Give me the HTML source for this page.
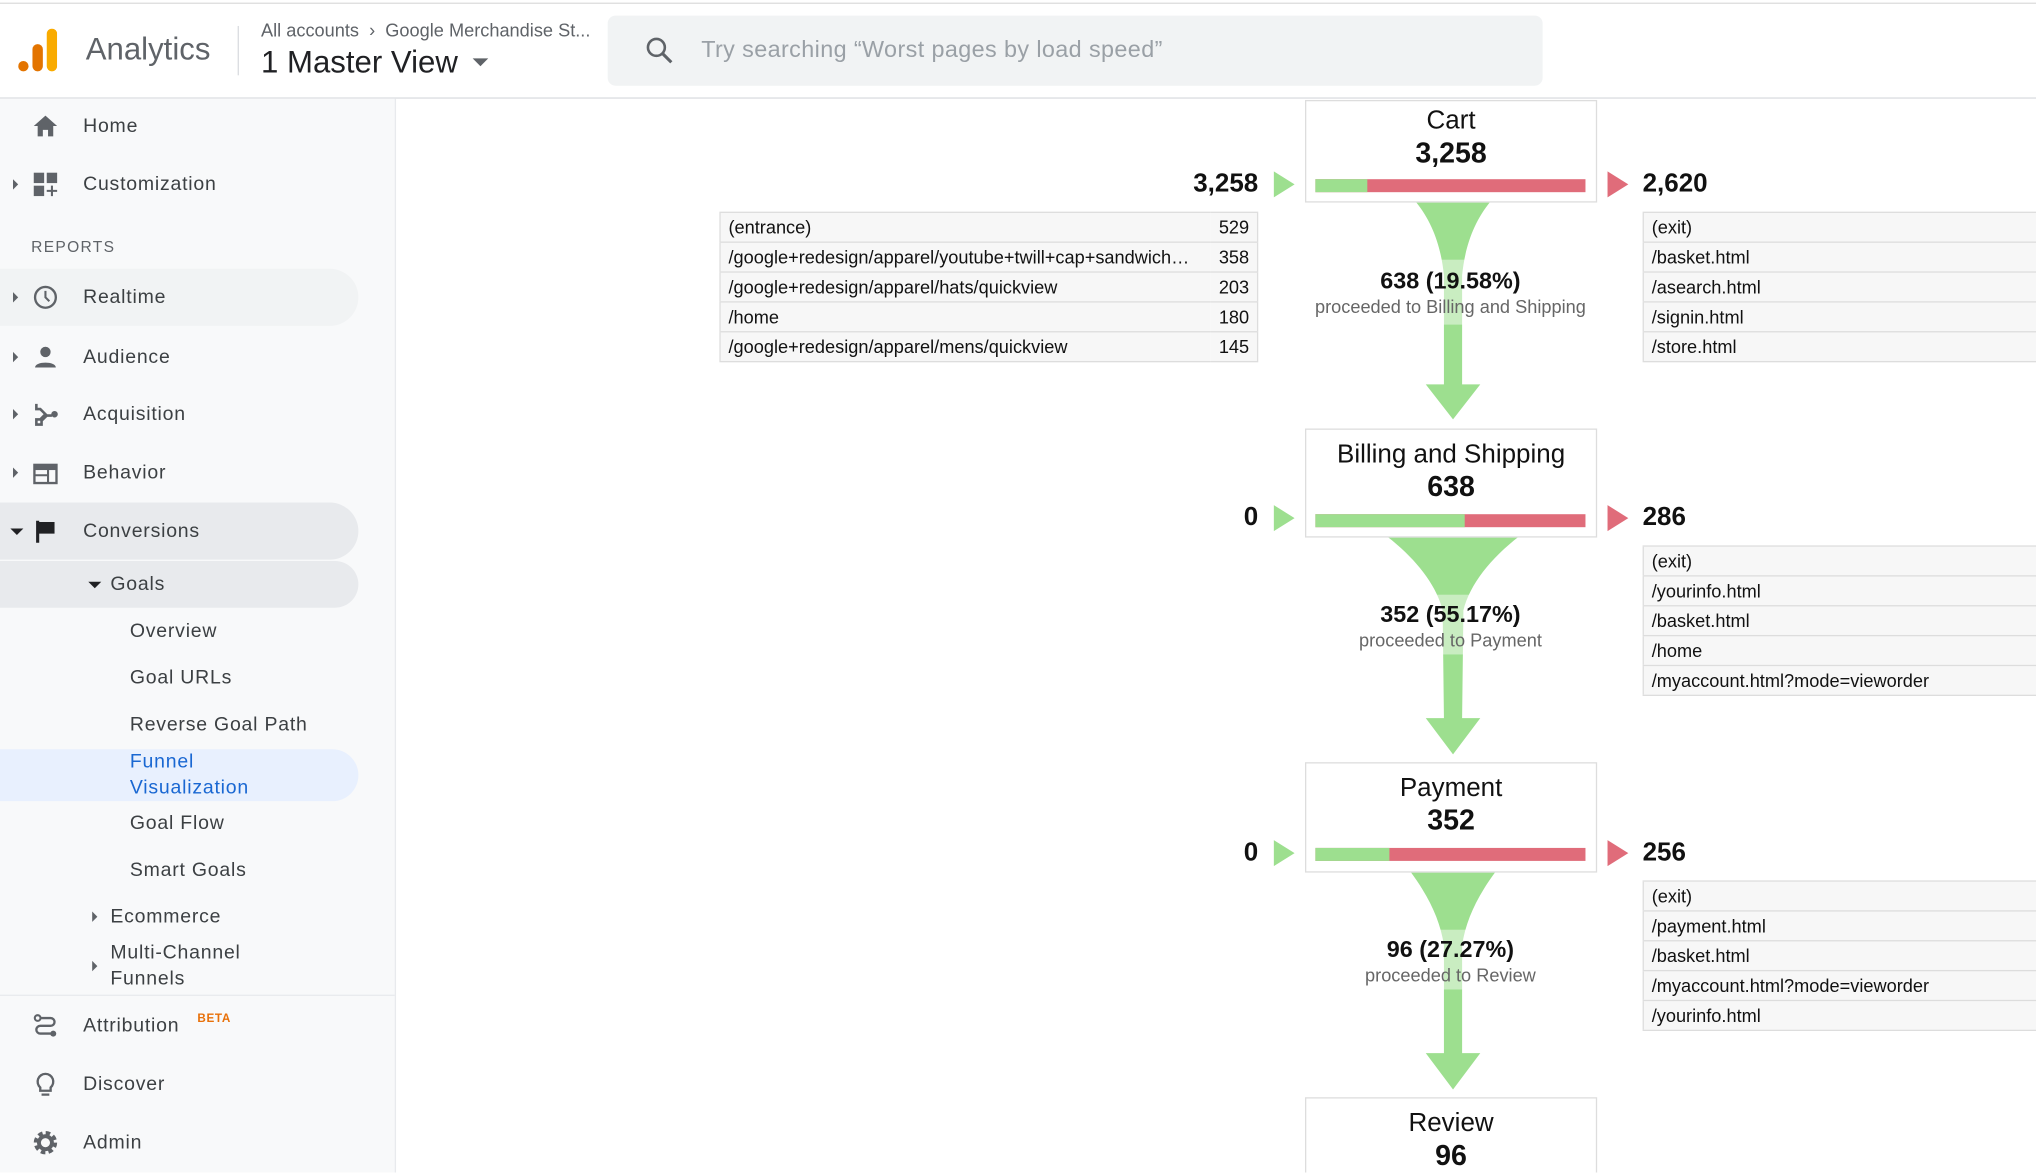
<!DOCTYPE html>
<html><head><meta charset="utf-8"><style>
html,body{margin:0;padding:0;width:2036px;height:1172px;overflow:hidden;background:#fff;font-family:"Liberation Sans",sans-serif}
#w{position:absolute;left:0;top:0;width:1568px;height:903px;transform:scale(1.2985);transform-origin:0 0;overflow:hidden}
.a{position:absolute;white-space:nowrap}
.nav{position:absolute;left:64px;font-size:15px;letter-spacing:.6px;color:#3c4043;transform:translateY(-50%)}
.sub{left:100px}
.car{position:absolute;width:0;height:0;border-top:4px solid transparent;border-bottom:4px solid transparent;border-left:4px solid #5f6368}
.ic{position:absolute;left:25px;width:20px;height:20px}
.box{position:absolute;left:1005px;width:223px;border:1px solid #ddd;background:#fff;text-align:center;color:#111}
.box .t{font-size:20px;margin-top:3px;line-height:24px}
.box .n{font-size:22px;font-weight:bold;line-height:26px}
.bar{position:absolute;left:7px;width:208px;height:10px;background:#e06c7a}
.bar i{position:absolute;left:0;top:0;height:10px;background:#9ddf8f}
.num{position:absolute;font-size:20px;font-weight:bold;color:#111;transform:translateY(-50%)}
.tri{position:absolute;width:0;height:0;border-top:10px solid transparent;border-bottom:10px solid transparent;border-left:16px solid #9ddf8f}
.tri.r{border-left-color:#e06c7a}
table{position:absolute;border-collapse:collapse;font-size:14px;color:#111;border:1px solid #ddd}
td{border-top:1px solid #ddd;border-bottom:1px solid #ddd;background:#f7f7f7;height:22px;padding:0 6px;white-space:nowrap}
td.v{text-align:right}
.pc{position:absolute;left:1005px;width:224px;text-align:center}
.pc b{display:block;font-size:18px;color:#111}
.pc span{display:block;font-size:14px;color:#666;margin-top:1px}
</style></head><body><div id="w">
<div class="a" style="left:0;top:2px;width:1568px;height:1px;background:#ddd"></div>
<div class="a" style="left:0;top:75px;width:1568px;height:1px;background:#dadce0"></div>
<svg class="a" style="left:14px;top:22px" width="30" height="34"><circle cx="4" cy="29" r="4" fill="#e37400"/><rect x="11" y="12" width="8" height="21" rx="4" fill="#e37400"/><rect x="22" y="0" width="8" height="33" rx="4" fill="#f9ab00"/></svg>
<div class="a" style="left:66px;top:25px;font-size:24px;color:#5f6368">Analytics</div>
<div class="a" style="left:183px;top:20px;width:1px;height:38px;background:#dadce0"></div>
<div class="a" style="left:201px;top:15px;font-size:14px;color:#5f6368">All accounts &nbsp;›&nbsp; Google Merchandise St...</div>
<div class="a" style="left:201px;top:35px;font-size:24px;color:#202124">1 Master View</div>
<div class="a" style="left:364px;top:45px;border-left:6px solid transparent;border-right:6px solid transparent;border-top:6px solid #5f6368"></div>
<div class="a" style="left:468px;top:12px;width:720px;height:54px;background:#f1f3f4;border-radius:6px"></div>
<svg class="a" style="left:497px;top:28px" width="22" height="22"><circle cx="8.5" cy="8.5" r="6.5" fill="none" stroke="#5f6368" stroke-width="2"/><line x1="13.5" y1="13.5" x2="20" y2="20" stroke="#5f6368" stroke-width="2.4"/></svg>
<div class="a" style="left:540px;top:28px;font-size:18px;color:#9aa0a6;letter-spacing:.3px">Try searching “Worst pages by load speed”</div>

<div class="a" style="left:0;top:76px;width:304px;height:827px;background:#f8f9fa;border-right:1px solid #e8eaed"></div>
<div class="a" style="left:0;top:207px;width:276px;height:44px;background:#f1f3f4;border-radius:0 22px 22px 0"></div>
<div class="a" style="left:0;top:387px;width:276px;height:44px;background:#e8eaed;border-radius:0 22px 22px 0"></div>
<div class="a" style="left:0;top:432px;width:276px;height:36px;background:#e8eaed;border-radius:0 18px 18px 0"></div>
<div class="a" style="left:0;top:577px;width:276px;height:40px;background:#e8f0fe;border-radius:0 20px 20px 0"></div>
<div class="a" style="left:0;top:766px;width:304px;height:1px;background:#e8eaed"></div>

<svg class="ic" style="top:87px" viewBox="0 0 20 20"><path d="M10 2L1 10h3v8h4v-5h4v5h4v-8h3z" fill="#5f6368"/></svg>
<svg class="ic" style="top:132px" viewBox="0 0 20 20"><rect x="1" y="1" width="8" height="8" fill="#5f6368"/><rect x="11" y="1" width="8" height="8" fill="#5f6368"/><rect x="1" y="11" width="8" height="8" fill="#5f6368"/><path d="M15 11v8M11 15h8" stroke="#5f6368" stroke-width="1.6"/></svg>
<svg class="ic" style="top:219px" viewBox="0 0 20 20"><circle cx="10" cy="10" r="8" fill="none" stroke="#5f6368" stroke-width="1.8"/><path d="M10 5v5l3 3" fill="none" stroke="#5f6368" stroke-width="1.6"/></svg>
<svg class="ic" style="top:265px" viewBox="0 0 20 20"><circle cx="10" cy="6" r="4" fill="#5f6368"/><path d="M2 18c0-5 16-5 16 0z" fill="#5f6368"/></svg>
<svg class="ic" style="top:309px" viewBox="0 0 20 20"><path d="M3 2v4h3l4 4-4 4H3v4h4v-3l4-4h4" fill="none" stroke="#5f6368" stroke-width="2"/><circle cx="17" cy="10" r="2.5" fill="#5f6368"/></svg>
<svg class="ic" style="top:355px" viewBox="0 0 20 20"><rect x="1.5" y="3" width="17" height="14" fill="none" stroke="#5f6368" stroke-width="1.8"/><rect x="1.5" y="3" width="17" height="4" fill="#5f6368"/><path d="M2 11h10M12 7v10" stroke="#5f6368" stroke-width="1.6"/></svg>
<svg class="ic" style="top:399px" viewBox="0 0 20 20"><path d="M4 2v17" stroke="#202124" stroke-width="2.4"/><path d="M4 3h13v9H4z" fill="#202124"/></svg>
<svg class="ic" style="top:780px" viewBox="0 0 20 20"><circle cx="4" cy="4" r="2.2" fill="none" stroke="#5f6368" stroke-width="1.6"/><circle cx="16" cy="16" r="2.3" fill="#5f6368"/><path d="M6 4h8a3 3 0 010 6H6a3 3 0 000 6h8" fill="none" stroke="#5f6368" stroke-width="1.8"/></svg>
<svg class="ic" style="top:825px" viewBox="0 0 20 20"><path d="M10 2a6 6 0 00-4 10.5V15h8v-2.5A6 6 0 0010 2z" fill="none" stroke="#5f6368" stroke-width="1.8"/><path d="M7 18h6" stroke="#5f6368" stroke-width="1.8"/></svg>
<svg class="ic" style="top:870px" viewBox="0 0 20 20"><circle cx="10" cy="10" r="6.5" fill="none" stroke="#5f6368" stroke-width="5" stroke-dasharray="3 2.1"/><circle cx="10" cy="10" r="5" fill="none" stroke="#5f6368" stroke-width="3"/></svg>

<div class="car" style="left:10px;top:138px"></div>
<div class="car" style="left:10px;top:225px"></div>
<div class="car" style="left:10px;top:271px"></div>
<div class="car" style="left:10px;top:315px"></div>
<div class="car" style="left:10px;top:360px"></div>
<div class="a" style="left:8px;top:407px;border-left:5px solid transparent;border-right:5px solid transparent;border-top:5px solid #202124"></div>
<div class="a" style="left:68px;top:448px;border-left:5px solid transparent;border-right:5px solid transparent;border-top:5px solid #202124"></div>
<div class="car" style="left:71px;top:702px"></div>
<div class="car" style="left:71px;top:740px"></div>

<div class="nav" style="top:97px">Home</div>
<div class="nav" style="top:142px">Customization</div>
<div class="nav" style="top:190px;left:24px;font-size:12px;letter-spacing:1px;color:#5f6368">REPORTS</div>
<div class="nav" style="top:229px">Realtime</div>
<div class="nav" style="top:275px">Audience</div>
<div class="nav" style="top:319px">Acquisition</div>
<div class="nav" style="top:364px">Behavior</div>
<div class="nav" style="top:409px">Conversions</div>
<div class="nav" style="top:450px;left:85px">Goals</div>
<div class="nav sub" style="top:486px">Overview</div>
<div class="nav sub" style="top:522px">Goal URLs</div>
<div class="nav sub" style="top:558px">Reverse Goal Path</div>
<div class="nav sub" style="top:597px;color:#1967d2;line-height:20px">Funnel<br>Visualization</div>
<div class="nav sub" style="top:634px">Goal Flow</div>
<div class="nav sub" style="top:670px">Smart Goals</div>
<div class="nav" style="top:706px;left:85px">Ecommerce</div>
<div class="nav" style="top:744px;left:85px;line-height:20px">Multi-Channel<br>Funnels</div>
<div class="nav" style="top:790px">Attribution</div>
<div class="a" style="left:152px;top:779px;font-size:9px;font-weight:bold;color:#e8710a;letter-spacing:.5px">BETA</div>
<div class="nav" style="top:835px">Discover</div>
<div class="nav" style="top:880px">Admin</div>

<svg class="a" style="left:0;top:0" width="1568" height="903">
<g fill="#9ddf8f">
<path d="M1090,155 C1104,172 1110,192 1112,212 L1112,296 L1098,296 L1119,323 L1140,296 L1126,296 L1126,212 C1128,192 1134,172 1148,155Z"/>
<path d="M1068,413 C1090,430 1106,450 1111,470 L1112,553 L1098,553 L1119,581 L1140,553 L1126,553 L1127,470 C1132,450 1148,430 1170,413Z"/>
<path d="M1086,671 C1100,690 1109,708 1112,728 L1112,811 L1098,811 L1119,839 L1140,811 L1126,811 L1126,728 C1129,708 1138,690 1152,671Z"/>
</g>
<g fill="#fff" opacity=".45"><rect x="1108" y="200" width="22" height="50"/><rect x="1100" y="458" width="38" height="46"/><rect x="1106" y="716" width="26" height="46"/></g>
</svg>

<div class="box" style="top:77px;height:77px"><div class="t">Cart</div><div class="n">3,258</div><div class="bar" style="top:60px"><i style="width:40px"></i></div></div>
<div class="box" style="top:330px;height:82px"><div class="t" style="margin-top:7px">Billing and Shipping</div><div class="n">638</div><div class="bar" style="top:65px"><i style="width:115px"></i></div></div>
<div class="box" style="top:587px;height:83px"><div class="t" style="margin-top:7px">Payment</div><div class="n">352</div><div class="bar" style="top:65px"><i style="width:57px"></i></div></div>
<div class="box" style="top:845px;height:90px"><div class="t" style="margin-top:7px">Review</div><div class="n">96</div></div>

<div class="num" style="right:599px;top:142px">3,258</div>
<div class="tri" style="left:981px;top:132px"></div>
<div class="tri r" style="left:1238px;top:132px"></div>
<div class="num" style="left:1265px;top:142px">2,620</div>
<div class="num" style="right:599px;top:399px">0</div>
<div class="tri" style="left:981px;top:389px"></div>
<div class="tri r" style="left:1238px;top:389px"></div>
<div class="num" style="left:1265px;top:399px">286</div>
<div class="num" style="right:599px;top:657px">0</div>
<div class="tri" style="left:981px;top:647px"></div>
<div class="tri r" style="left:1238px;top:647px"></div>
<div class="num" style="left:1265px;top:657px">256</div>

<div class="pc" style="top:206px"><b>638 (19.58%)</b><span>proceeded to Billing and Shipping</span></div>
<div class="pc" style="top:463px"><b>352 (55.17%)</b><span>proceeded to Payment</span></div>
<div class="pc" style="top:721px"><b>96 (27.27%)</b><span>proceeded to Review</span></div>

<table style="left:554px;top:163px;width:415px">
<tr><td>(entrance)</td><td class="v">529</td></tr>
<tr><td>/google+redesign/apparel/youtube+twill+cap+sandwich…</td><td class="v">358</td></tr>
<tr><td>/google+redesign/apparel/hats/quickview</td><td class="v">203</td></tr>
<tr><td>/home</td><td class="v">180</td></tr>
<tr><td>/google+redesign/apparel/mens/quickview</td><td class="v">145</td></tr>
</table>
<table style="left:1265px;top:163px;width:320px">
<tr><td>(exit)</td></tr><tr><td>/basket.html</td></tr><tr><td>/asearch.html</td></tr><tr><td>/signin.html</td></tr><tr><td>/store.html</td></tr>
</table>
<table style="left:1265px;top:420px;width:320px">
<tr><td>(exit)</td></tr><tr><td>/yourinfo.html</td></tr><tr><td>/basket.html</td></tr><tr><td>/home</td></tr><tr><td>/myaccount.html?mode=vieworder</td></tr>
</table>
<table style="left:1265px;top:678px;width:320px">
<tr><td>(exit)</td></tr><tr><td>/payment.html</td></tr><tr><td>/basket.html</td></tr><tr><td>/myaccount.html?mode=vieworder</td></tr><tr><td>/yourinfo.html</td></tr>
</table>
</div></body></html>
